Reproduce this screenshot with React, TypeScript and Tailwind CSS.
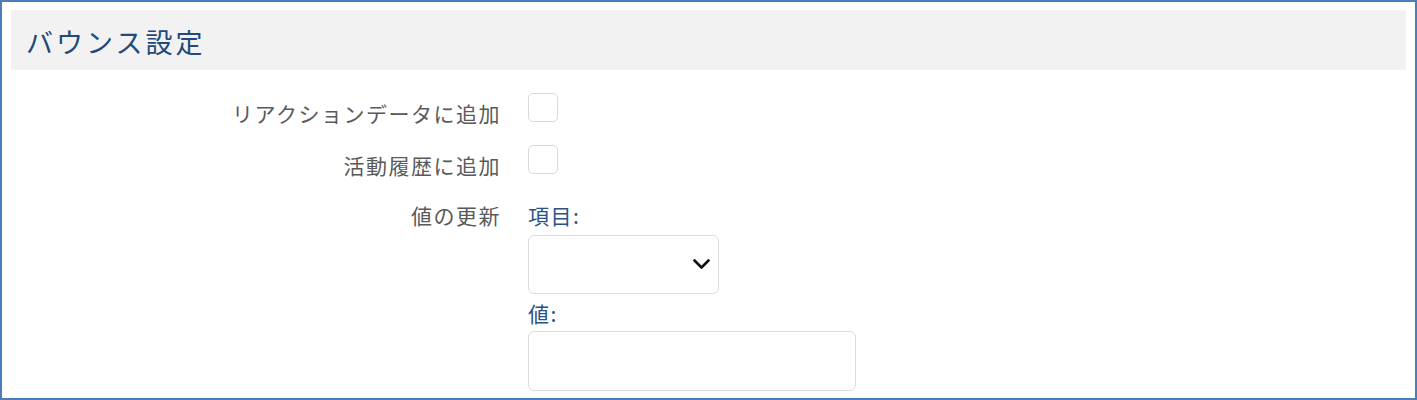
import React from "react";

const jp = { fontFamily: '"Noto Sans CJK JP", "Noto Sans", sans-serif' };

export default function App() {
  return (
    <div
      className="w-[1417px] h-[400px] border-2 border-[#4a7ebb] bg-white box-border overflow-hidden"
      style={jp}
    >
      <div className="mx-[9px] mt-[8px] h-[60px] bg-[#f2f2f2] flex items-center pl-[15px]">
        <h1 className="text-[27px] leading-none tracking-[3px] text-[#22497a] mt-[2px]">
          バウンス設定
        </h1>
      </div>

      <div className="flex flex-col">
        <div className="flex h-[29px] mt-[23px]">
          <div className="w-[499px] text-right text-[21px] leading-[28px] tracking-[1.5px] text-[#5a5a5a] pt-[6px] whitespace-nowrap">
            リアクションデータに追加
          </div>
          <div className="ml-[27px]">
            <div className="w-[30px] h-[29px] rounded-[5px] border border-[#d9d9d9] bg-white" />
          </div>
        </div>

        <div className="flex h-[29px] mt-[23px]">
          <div className="w-[499px] text-right text-[21px] leading-[28px] tracking-[1.5px] text-[#5a5a5a] pt-[6px] whitespace-nowrap">
            活動履歴に追加
          </div>
          <div className="ml-[27px]">
            <div className="w-[30px] h-[29px] rounded-[5px] border border-[#d9d9d9] bg-white" />
          </div>
        </div>

        <div className="flex mt-[27px]">
          <div className="w-[499px] text-right text-[21px] leading-[28px] tracking-[1.5px] text-[#5a5a5a] whitespace-nowrap">
            値の更新
          </div>
          <div className="ml-[27px] flex flex-col">
            <div className="text-[21px] leading-[28px] tracking-[1.5px] text-[#2a5288]">項目:</div>
            <div className="mt-[6px] w-[191px] h-[59px] rounded-[6px] border border-[#dcdcdc] bg-white flex items-center justify-end pr-[8px]">
              <svg width="17" height="11" viewBox="0 0 17 11" fill="none">
                <path d="M1.5 1.5 L8.5 8.5 L15.5 1.5" stroke="#111" strokeWidth="2.6" strokeLinecap="round" strokeLinejoin="round" />
              </svg>
            </div>
            <div className="mt-[5px] text-[21px] leading-[28px] tracking-[1.5px] text-[#2a5288]">値:</div>
            <div className="mt-[4px] w-[328px] h-[60px] rounded-[6px] border border-[#dcdcdc] bg-white" />
          </div>
        </div>
      </div>
    </div>
  );
}
